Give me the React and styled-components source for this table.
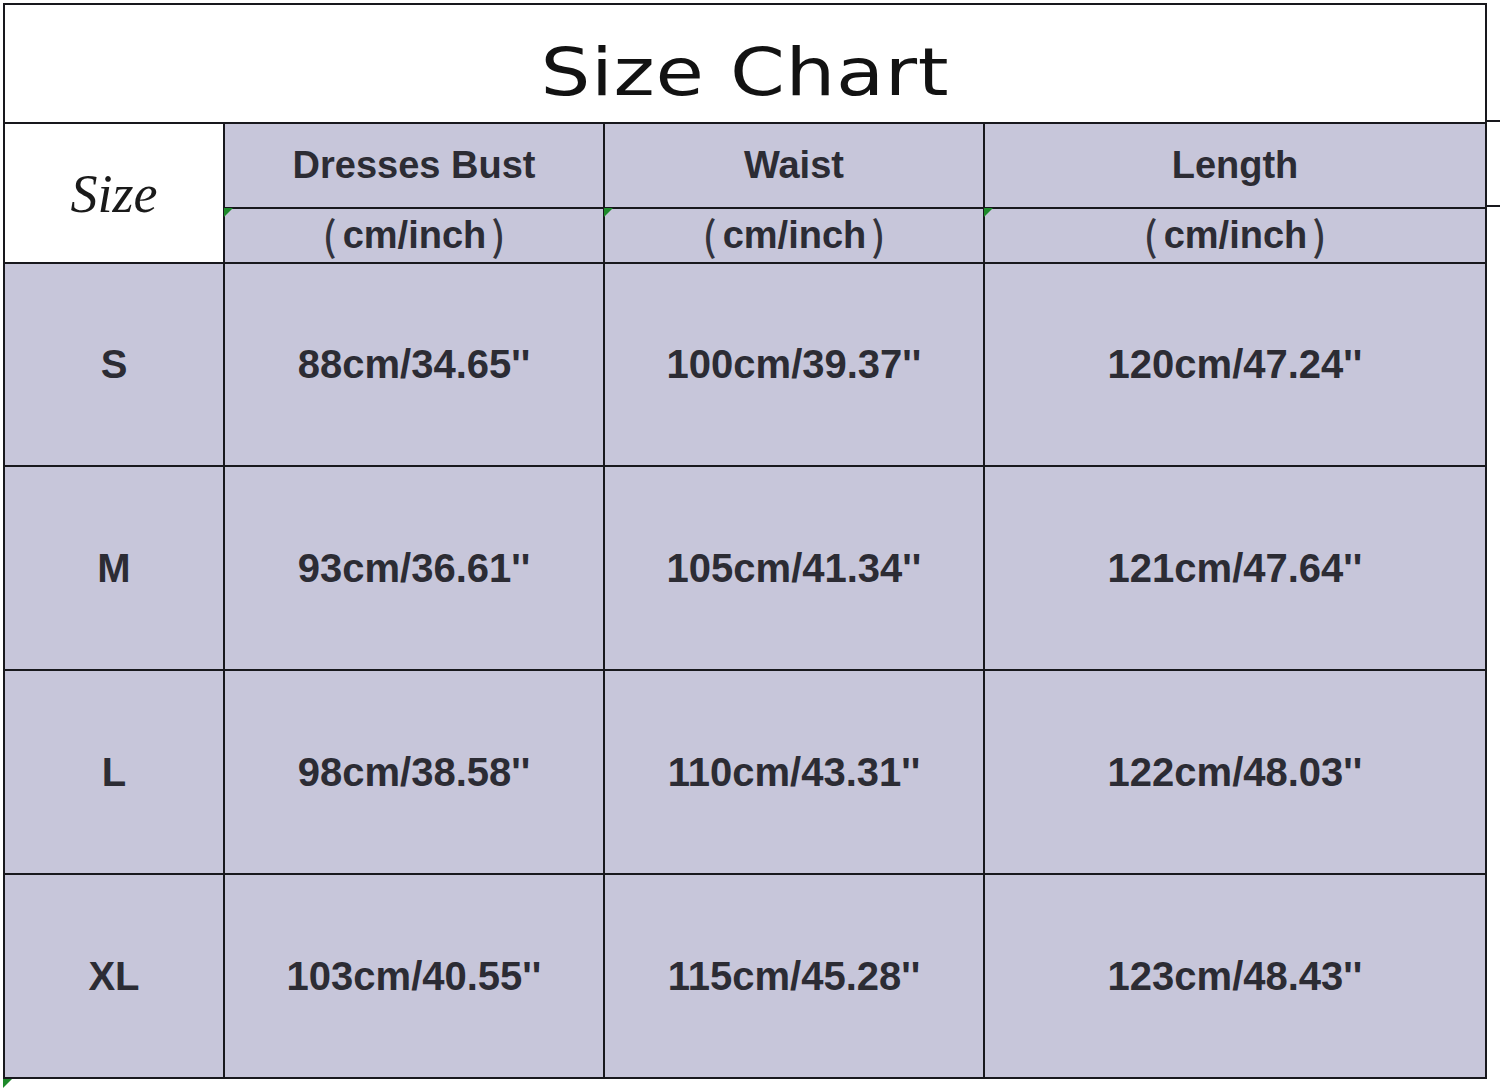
import React from "react";
import styled, { createGlobalStyle } from "styled-components";

const GlobalStyle = createGlobalStyle`
  html, body {
    margin: 0;
    padding: 0;
    background: #ffffff;
  }
  body {
    font-family: "Liberation Sans", "Noto Sans CJK SC", Arial, sans-serif;
  }
`;

const rows = [
  { size: "S", bust: "88cm/34.65''", waist: "100cm/39.37''", length: "120cm/47.24''" },
  { size: "M", bust: "93cm/36.61''", waist: "105cm/41.34''", length: "121cm/47.64''" },
  { size: "L", bust: "98cm/38.58''", waist: "110cm/43.31''", length: "122cm/48.03''" },
  { size: "XL", bust: "103cm/40.55''", waist: "115cm/45.28''", length: "123cm/48.43''" },
];

const headers = ["Dresses Bust", "Waist", "Length"];

const Page = styled.div`
  display: flex;
  align-items: flex-start;
  padding: 3px 0 0 3px;
  width: 1500px;
  height: 1091px;
  box-sizing: border-box;
  overflow: hidden;
`;

const Sheet = styled.div`
  display: grid;
  grid-template-columns: 218px 378px 378px 500px;
  grid-template-rows: 117px 83px 53px 201px 202px 202px 202px;
  gap: 2px;
  padding: 2px;
  background: #18181d;
  position: relative;
`;

const Title = styled.div`
  grid-column: 1 / -1;
  background: #ffffff;
  display: flex;
  align-items: center;
  justify-content: center;
  padding-top: 18px;
  box-sizing: border-box;
`;

const TitleText = styled.span`
  display: inline-block;
  font-family: "DejaVu Sans", sans-serif;
  font-size: 65px;
  color: #121212;
  transform: scaleX(1.21);
  letter-spacing: 0.5px;
`;

const SizeHead = styled.div`
  grid-row: 2 / 4;
  grid-column: 1;
  background: #ffffff;
  display: flex;
  align-items: center;
  justify-content: center;
  padding-top: 2px;
  font-family: "Liberation Serif", "Times New Roman", serif;
  font-style: italic;
  font-size: 54px;
  color: #1a1a1a;
`;

const Cell = styled.div`
  background: #c7c6da;
  display: flex;
  align-items: center;
  justify-content: center;
  position: relative;
  font-weight: bold;
  font-size: ${({ $small }) => ($small ? "38px" : "40px")};
  color: #2c2c34;
  white-space: nowrap;

  ${({ $flag }) =>
    $flag &&
    `
    &::before {
      content: "";
      position: absolute;
      left: -1px;
      top: -1px;
      border-top: 9px solid #1d8a2a;
      border-right: 9px solid transparent;
    }
  `}
`;

const Paren = styled.span`
  font-family: "Noto Sans CJK SC", sans-serif;
  font-weight: 500;
  font-size: 40px;
  color: #33333c;
  margin: ${({ $side }) => ($side === "left" ? "0 6px 0 0" : "0 0 0 5px")};
  position: relative;
  top: -2px;
`;

const CornerFlag = styled.div`
  position: absolute;
  left: 0;
  bottom: -9px;
  border-top: 9px solid #1d8a2a;
  border-right: 9px solid transparent;
`;

const Gutter = styled.div`
  display: flex;
  flex-direction: column;
  padding-top: 117px;
  width: 16px;
`;

const GutterLine = styled.div`
  height: 83px;
  border-top: 2px solid #18181d;
  border-bottom: 2px solid #18181d;
`;

export default function App() {
  return (
    <>
      <GlobalStyle />
      <Page>
        <Sheet>
          <Title>
            <TitleText>Size Chart</TitleText>
          </Title>

          <SizeHead>Size</SizeHead>
          {headers.map((h) => (
            <Cell key={h} $small>
              {h}
            </Cell>
          ))}
          {headers.map((h) => (
            <Cell key={h + "-unit"} $small $flag>
              <Paren $side="left">(</Paren>
              cm/inch
              <Paren $side="right">)</Paren>
            </Cell>
          ))}

          {rows.map((r) => (
            <React.Fragment key={r.size}>
              <Cell>{r.size}</Cell>
              <Cell>{r.bust}</Cell>
              <Cell>{r.waist}</Cell>
              <Cell>{r.length}</Cell>
            </React.Fragment>
          ))}
          <CornerFlag />
        </Sheet>
        <Gutter>
          <GutterLine />
        </Gutter>
      </Page>
    </>
  );
}
